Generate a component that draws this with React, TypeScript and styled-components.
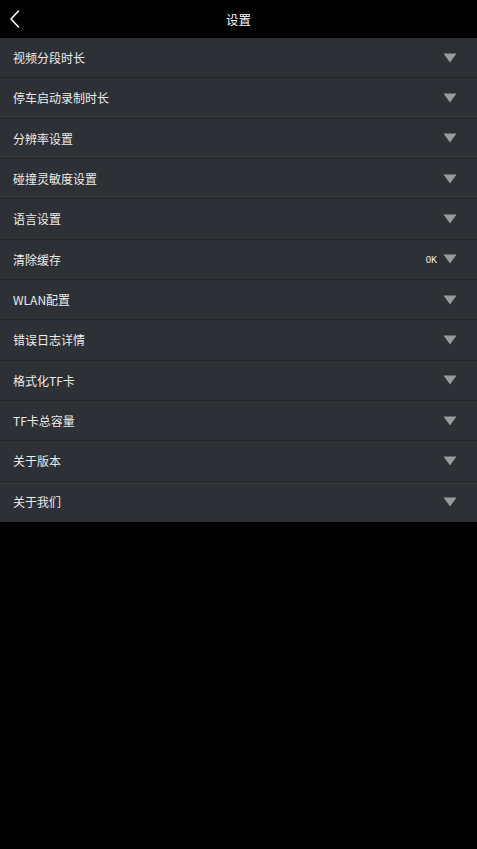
import React from "react";
import styled, { createGlobalStyle } from "styled-components";

const GlobalStyle = createGlobalStyle`
  html, body {
    margin: 0;
    padding: 0;
    background: #000;
  }
  body {
    font-family: "Noto Sans CJK SC", "Noto Sans", Roboto, sans-serif;
  }
`;

const items = [
  { label: "视频分段时长" },
  { label: "停车启动录制时长" },
  { label: "分辨率设置" },
  { label: "碰撞灵敏度设置" },
  { label: "语言设置" },
  { label: "清除缓存", value: "0K" },
  { label: "WLAN配置" },
  { label: "错误日志详情" },
  { label: "格式化TF卡" },
  { label: "TF卡总容量" },
  { label: "关于版本" },
  { label: "关于我们" },
];

const Arrow = () => (
  <svg width="14" height="10" viewBox="0 0 14 10">
    <path d="M0.5 0.5 L13.5 0.5 L7 9.5 Z" fill="#9a9b9d" />
  </svg>
);

const BackIcon = () => (
  <svg width="12" height="18" viewBox="0 0 12 18">
    <path d="M9.5 1 L2 9 L9.5 17" fill="none" stroke="#fff" strokeWidth="1.5" strokeLinecap="round" strokeLinejoin="round" />
  </svg>
);

export default function App() {
  return (
    <Page>
      <GlobalStyle />
      <Header>
        <BackButton>
          <BackIcon />
        </BackButton>
        <Title>设置</Title>
      </Header>
      <List>
        {items.map((it) => (
          <Row key={it.label}>
            <Label>{it.label}</Label>
            <Right>
              {it.value && <Value>{it.value}</Value>}
              <Arrow />
            </Right>
          </Row>
        ))}
      </List>
    </Page>
  );
}

const Page = styled.div`
  width: 477px;
  min-height: 849px;
  background: #000;
  display: flex;
  flex-direction: column;
`;

const Header = styled.div`
  position: relative;
  height: 38px;
  display: flex;
  align-items: center;
  justify-content: center;
  background: #000;
`;

const BackButton = styled.div`
  position: absolute;
  left: 9px;
  top: 10px;
  display: flex;
`;

const Title = styled.div`
  color: #fff;
  font-size: 12.5px;
`;

const List = styled.div`
  display: flex;
  flex-direction: column;
  background: #2d3035;
`;

const Row = styled.div`
  box-sizing: border-box;
  height: 40.33px;
  display: flex;
  align-items: center;
  justify-content: space-between;
  padding: 0 20px 0 13px;
  border-bottom: 1px solid #222428;
  &:last-child {
    border-bottom: none;
  }
`;

const Label = styled.div`
  color: #ececec;
  font-size: 12px;
`;

const Right = styled.div`
  display: flex;
  align-items: center;
  gap: 6px;
`;

const Value = styled.span`
  color: #f0f0f0;
  font-family: Roboto, sans-serif;
  font-size: 9.5px;
`;
